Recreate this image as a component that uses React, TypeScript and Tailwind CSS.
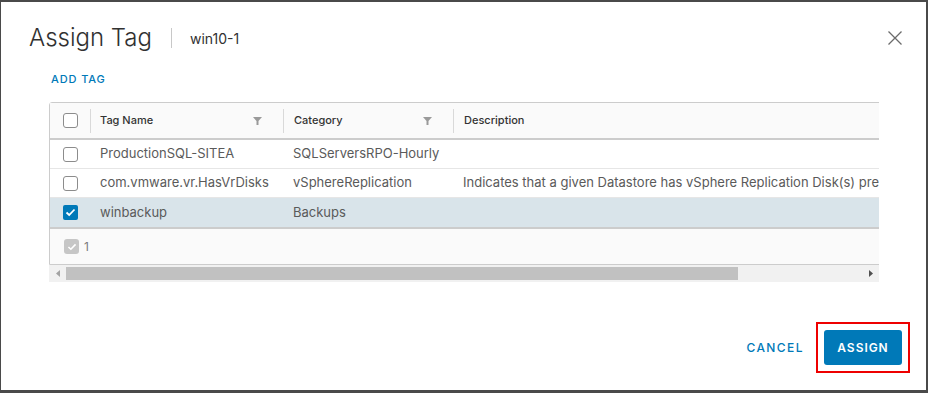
import React from "react";

const Box = ({ checked = false }: { checked?: boolean }) =>
  checked ? (
    <div className="w-[15px] h-[15px] rounded-[2px] bg-[#0079b8] flex items-center justify-center">
      <svg width="11" height="9" viewBox="0 0 11 9">
        <path d="M1.5 4.5 L4.2 7 L9.5 1.5" stroke="white" strokeWidth="1.8" fill="none" />
      </svg>
    </div>
  ) : (
    <div className="w-[15px] h-[15px] rounded-[3px] border border-[#8c8c8c] bg-white" />
  );

const Filter = () => (
  <svg width="9" height="8" viewBox="0 0 9 8">
    <path d="M0 0 H9 L5.5 4 V8 H3.5 V4 Z" fill="#9a9a9a" />
  </svg>
);

const rows = [
  { name: "ProductionSQL-SITEA", cat: "SQLServersRPO-Hourly", desc: "", sel: false },
  { name: "com.vmware.vr.HasVrDisks", cat: "vSphereReplication", desc: "Indicates that a given Datastore has vSphere Replication Disk(s) present", sel: false },
  { name: "winbackup", cat: "Backups", desc: "", sel: true },
];

export default function App() {
  return (
    <div
      className="w-[928px] h-[393px] bg-[#4a4a4a] pt-[2px] pl-[1px] overflow-hidden"
      style={{ fontFamily: "Inter, 'Noto Sans', sans-serif" }}
    >
      <div className="w-[925px] h-[388px] bg-white flex flex-col">
        <div className="flex items-center justify-between pl-[28px] pr-[23px] pt-[20px]">
          <div className="flex items-center">
            <span className="text-[24px] leading-[32px] font-light text-[#313131]">Assign Tag</span>
            <div className="w-px h-[20px] bg-[#c8c8c8] ml-[19px] mr-[18px]" />
            <span className="text-[14px] text-[#313131]">win10-1</span>
          </div>
          <svg width="16" height="16" viewBox="0 0 16 16">
            <path d="M1.5 1.5 L14.5 14.5 M14.5 1.5 L1.5 14.5" stroke="#6b6b6b" strokeWidth="1.3" />
          </svg>
        </div>
        <div className="pl-[50px] mt-[18px] text-[11px] leading-[14px] tracking-[0.08em] font-medium text-[#0079b8]">
          ADD TAG
        </div>
        <div className="ml-[48px] mt-[16px] w-[830px] overflow-hidden">
          <div className="w-[1000px] border border-[#cccccc] rounded-t-[3px] text-[13px]">
            <div className="h-[37px] bg-[#fafafa] flex items-center border-b-2 border-[#cccccc] text-[11px] font-medium text-[#333]">
              <div className="w-[40px] flex justify-center pl-[1px]">
                <Box />
              </div>
              <div className="w-px h-[24px] bg-[#d9d9d9]" />
              <div className="w-[192px] pl-[9px] pr-[21px] flex items-center justify-between">
                <span>Tag Name</span>
                <Filter />
              </div>
              <div className="w-px h-[24px] bg-[#d9d9d9]" />
              <div className="w-[169px] pl-[10px] pr-[21px] flex items-center justify-between">
                <span>Category</span>
                <Filter />
              </div>
              <div className="w-px h-[24px] bg-[#d9d9d9]" />
              <div className="pl-[10px]">Description</div>
            </div>
            {rows.map((r, i) => (
              <div
                key={i}
                className={`h-[29px] flex items-center text-[#5a5a5a] ${
                  i < 2 ? "border-b border-[#e6e6e6]" : ""
                } ${r.sel ? "bg-[#d9e4ea]" : "bg-white"}`}
              >
                <div className="w-[40px] flex justify-center pl-[1px]">
                  <Box checked={r.sel} />
                </div>
                <div className="w-[193px] pl-[10px] whitespace-nowrap">{r.name}</div>
                <div className="w-[170px] pl-[10px] whitespace-nowrap">{r.cat}</div>
                <div className="pl-[10px] whitespace-nowrap">{r.desc}</div>
              </div>
            ))}
            <div className="h-[37px] bg-[#fafafa] border-t-2 border-[#cccccc] flex items-center pl-[14px] text-[12px] text-[#7a7a7a]">
              <div className="w-[15px] h-[15px] rounded-[3px] bg-[#c6c6c6] flex items-center justify-center">
                <svg width="10" height="8" viewBox="0 0 11 9">
                  <path d="M1.5 4.5 L4.2 7 L9.5 1.5" stroke="white" strokeWidth="1.8" fill="none" />
                </svg>
              </div>
              <span className="ml-[5px]">1</span>
            </div>
          </div>
          <div className="w-[830px] h-[17px] bg-[#f1f1f1] flex items-center">
            <div className="w-[17px] flex justify-center">
              <svg width="4" height="7" viewBox="0 0 4 7">
                <path d="M4 0 V7 L0 3.5 Z" fill="#a3a3a3" />
              </svg>
            </div>
            <div className="w-[672px] h-[13px] bg-[#c1c1c1]" />
            <div className="flex-1" />
            <div className="w-[17px] flex justify-center">
              <svg width="4" height="7" viewBox="0 0 4 7">
                <path d="M0 0 V7 L4 3.5 Z" fill="#505050" />
              </svg>
            </div>
          </div>
        </div>
        <div className="mt-auto mb-[17px] flex justify-end items-center pr-[16px]">
          <button className="text-[12px] font-medium tracking-[0.12em] text-[#0079b8] mr-[12px]">CANCEL</button>
          <div className="border-2 border-[#ee0000] p-[6px]">
            <button className="w-[78px] h-[35px] rounded-[3px] bg-[#0079b8] text-white text-[12px] font-semibold tracking-[0.08em] flex items-center justify-center">
              ASSIGN
            </button>
          </div>
        </div>
      </div>
    </div>
  );
}
